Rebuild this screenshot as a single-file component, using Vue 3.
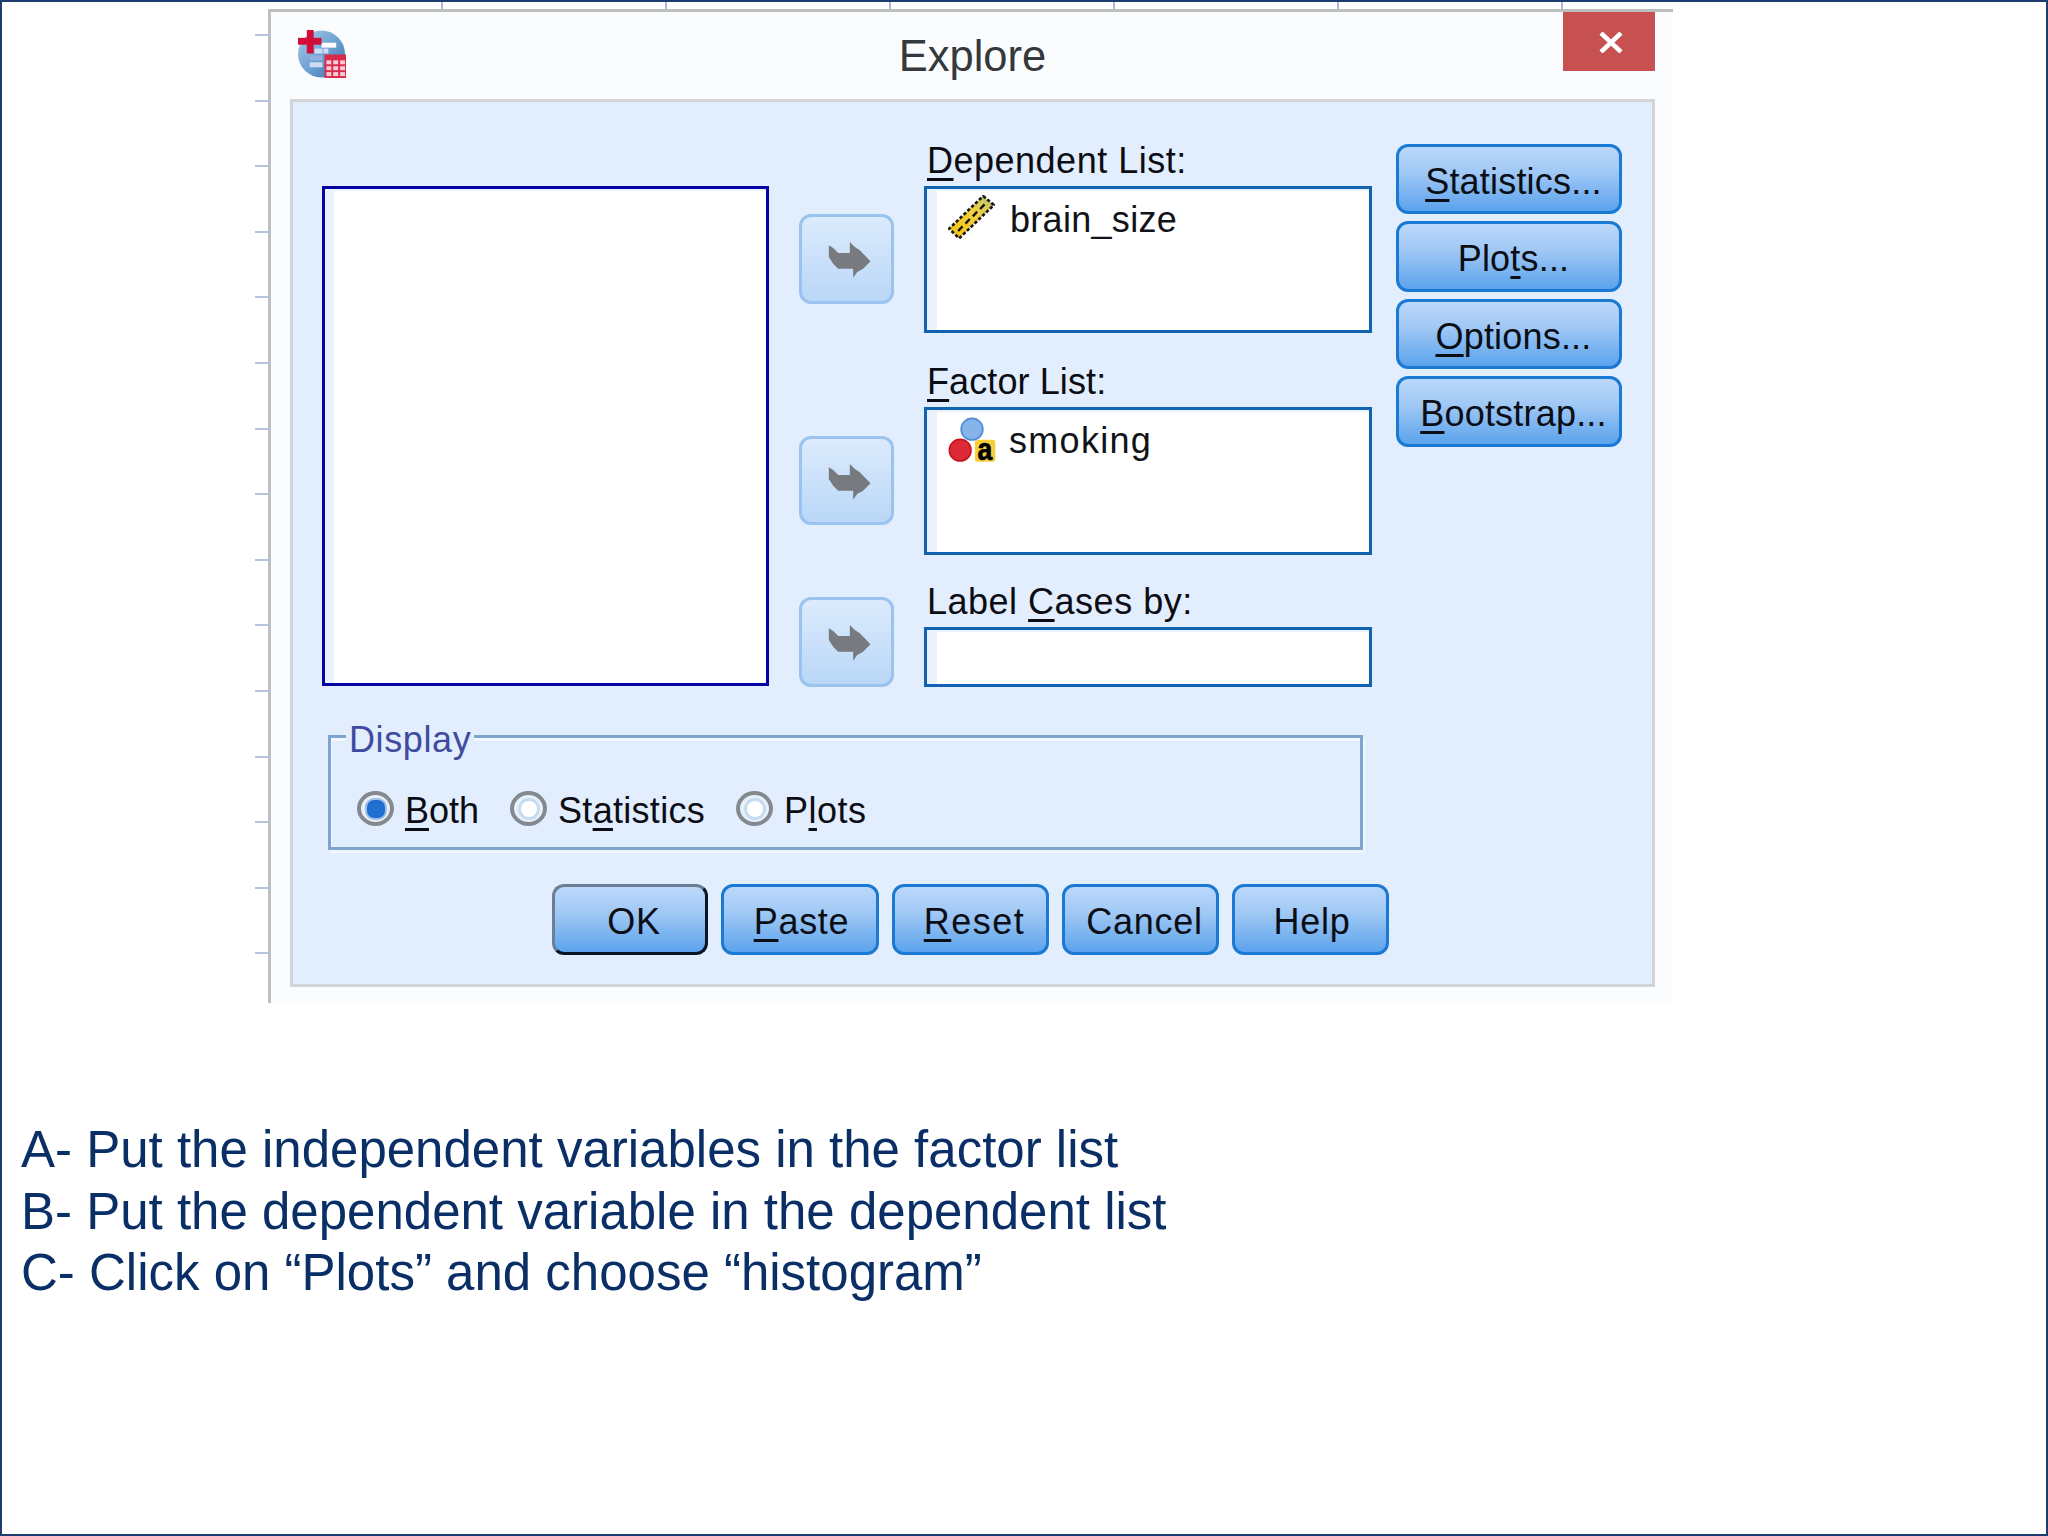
<script setup>
const arrows = ['a1', 'a2', 'a3']
</script>

<template>
  <div class="page">
    <div class="shot">
      <div class="corner"></div>
      <div class="ruler-top"></div>
      <div class="ruler-left"></div>
      <div class="sheet">
        <header class="titlebar">
          <svg class="app-icon" viewBox="0 0 49 49">
            <defs>
              <linearGradient id="globe" x1="0" y1="0" x2="1" y2="1">
                <stop offset="0" stop-color="#a9cbe8" />
                <stop offset="0.55" stop-color="#6a9fd0" />
                <stop offset="1" stop-color="#2f6fae" />
              </linearGradient>
            </defs>
            <circle cx="24" cy="24.5" r="24" fill="url(#globe)" />
            <rect x="24" y="13" width="15" height="5" fill="#fff" />
            <g fill="#cfdcf2">
              <rect x="17" y="19" width="8" height="5" />
              <rect x="26" y="19" width="5" height="5" />
              <rect x="12" y="26" width="13" height="5" fill="#8fb0e0" />
              <rect x="12" y="33" width="13" height="5" />
            </g>
            <rect x="9" y="0" width="7" height="24" fill="#d20d37" />
            <rect x="0" y="8" width="24" height="7" fill="#d20d37" />
            <rect x="27" y="25" width="22" height="24" fill="#d92b4c" />
            <g fill="#f7ccd8">
              <rect x="29" y="31" width="5" height="4" />
              <rect x="36" y="31" width="5" height="4" />
              <rect x="43" y="31" width="5" height="4" />
              <rect x="29" y="37" width="5" height="4" />
              <rect x="36" y="37" width="5" height="4" />
              <rect x="43" y="37" width="5" height="4" />
              <rect x="29" y="43" width="5" height="4" />
              <rect x="36" y="43" width="5" height="4" />
              <rect x="43" y="43" width="5" height="4" />
            </g>
          </svg>
          <div class="title">Explore</div>
          <button class="close">
            <svg viewBox="0 0 24 21" class="close-x">
              <path d="M2 1 L22 20 M22 1 L2 20" stroke="#fff" stroke-width="4.5" fill="none" />
            </svg>
          </button>
        </header>

        <section class="panel">
          <div class="upper">
            <div class="source"></div>

            <div class="arrows">
              <button v-for="a in arrows" :key="a" class="arrow" :class="a">
                <svg viewBox="145 125 128 108" class="arrow-g">
                  <polygon
                    points="147,135 160,143 175,158 210,158 210,125 225,140 240,150 272,183 250,205 232,215 220,232 220,205 175,205 160,190 147,170"
                    fill="#777a7e"
                  />
                </svg>
              </button>
            </div>

            <div class="fields">
              <label class="flabel sp5"><u>D</u>ependent List:</label>
              <div class="box dep">
                <div class="item">
                  <svg class="ruler" viewBox="55 42 140 132">
                    <defs>
                      <linearGradient id="rg" x1="0" y1="1" x2="1" y2="0">
                        <stop offset="0" stop-color="#f6c410" />
                        <stop offset="0.6" stop-color="#f0d040" />
                        <stop offset="1" stop-color="#b8c47a" />
                      </linearGradient>
                    </defs>
                    <polygon points="160,45 192,72 88,172 58,143" fill="url(#rg)" stroke="#1a1a1a" stroke-width="8" stroke-dasharray="10 6" />
                    <path d="M85 150 L98 136 M107 128 L120 114 M129 106 L142 92 M151 84 L164 70" stroke="#111" stroke-width="7" />
                  </svg>
                  <span class="iname name1">brain_size</span>
                </div>
              </div>

              <label class="flabel mid"><u>F</u>actor List:</label>
              <div class="box fac">
                <div class="item">
                  <svg class="nominal" viewBox="54 54 144 134">
                    <circle cx="126" cy="88" r="33" fill="#86b3ea" stroke="#4f8ed4" stroke-width="5" />
                    <circle cx="90" cy="152" r="33" fill="#dd2a36" stroke="#c4141f" stroke-width="5" />
                    <rect x="135" y="120" width="62" height="67" rx="8" fill="#f5cf3c" />
                    <text x="143" y="182" textLength="45" lengthAdjust="spacingAndGlyphs" class="a-glyph">a</text>
                  </svg>
                  <span class="iname name2">smoking</span>
                </div>
              </div>

              <label class="flabel mid2 sp5">Label <u>C</u>ases by:</label>
              <div class="box cases"></div>
            </div>

            <div class="side">
              <button class="btn side-b h70"><span><u>S</u>tatistics...</span></button>
              <button class="btn side-b h71"><span>Plo<u>t</u>s...</span></button>
              <button class="btn side-b h70"><span><u>O</u>ptions...</span></button>
              <button class="btn side-b h71"><span><u>B</u>ootstrap...</span></button>
            </div>
          </div>

          <div class="group">
            <div class="legend">Display</div>
            <div class="radios">
              <div class="radio-item">
                <span class="radio on"><i></i></span>
                <span class="rlabel"><u>B</u>oth</span>
              </div>
              <div class="radio-item">
                <span class="radio"><i></i></span>
                <span class="rlabel sp3">St<u>a</u>tistics</span>
              </div>
              <div class="radio-item">
                <span class="radio"><i></i></span>
                <span class="rlabel sp5">P<u>l</u>ots</span>
              </div>
            </div>
          </div>

          <div class="actions">
            <button class="btn act ok w156"><span>OK</span></button>
            <button class="btn act w158"><span><u>P</u>aste</span></button>
            <button class="btn act w157 wide"><span><u>R</u>eset</span></button>
            <button class="btn act w157 shift"><span>Cancel</span></button>
            <button class="btn act w157"><span>Help</span></button>
          </div>
        </section>
      </div>
    </div>

    <div class="notes">
      <p>A- Put the independent variables in the factor list</p>
      <p>B- Put the dependent variable in the dependent list</p>
      <p>C- Click on “Plots” and choose “histogram”</p>
    </div>
  </div>
</template>

<style scoped>
.page {
  width: 2048px;
  height: 1536px;
  box-sizing: border-box;
  border: 2px solid #1c3d6e;
  background: #fff;
  display: flex;
  flex-direction: column;
  font-family: "Liberation Sans", Arial, sans-serif;
  overflow: hidden;
}

.shot {
  display: grid;
  grid-template-columns: 13px 1405px;
  grid-template-rows: 7px 994px;
  margin-left: 253px;
  width: max-content;
}
.ruler-top {
  background: repeating-linear-gradient(
    to right,
    transparent 0 173px,
    #a9bdd8 173px 175px,
    transparent 175px 224px
  );
}
.ruler-left {
  background: repeating-linear-gradient(
    to bottom,
    transparent 0 25px,
    #b4c4de 25px 27px,
    transparent 27px 65.6px
  );
}

.sheet {
  box-sizing: border-box;
  border-top: 3px solid #bcbfbd;
  border-left: 3px solid #bdc0c2;
  background: #fbfcfe;
  display: flex;
  flex-direction: column;
  padding-right: 18px;
}

.titlebar {
  margin-left: 19px;
  height: 87px;
  display: grid;
  grid-template-columns: 1fr auto 1fr;
  align-items: start;
}
.app-icon {
  width: 48px;
  height: 48px;
  margin: 18px 0 0 8px;
}
.title {
  font-size: 43.5px;
  line-height: 43px;
  margin-top: 22.5px;
  color: #35383c;
}
.close {
  justify-self: end;
  width: 92px;
  height: 59px;
  border: 0;
  padding: 2px 0 0 4px;
  background: #c75050;
  display: flex;
  align-items: center;
  justify-content: center;
}
.close-x {
  width: 24px;
  height: 21px;
}

.panel {
  margin-left: 19px;
  height: 888px;
  box-sizing: border-box;
  border: 3px solid #d2d4d8;
  background: #e2eefd;
  padding: 42px 0 0 29px;
  display: flex;
  flex-direction: column;
}

.upper {
  display: flex;
  height: 543px;
}
.source {
  width: 447px;
  height: 500px;
  margin-top: 42px;
  box-sizing: border-box;
  border: 3px solid #0505a5;
  background: #fff;
  box-shadow: inset 9px 2px 0 #e9f2fd;
}

.arrows {
  width: 95px;
  margin: 0 30px;
  display: flex;
  flex-direction: column;
  padding-top: 70px;
}
.arrow {
  width: 95px;
  box-sizing: border-box;
  border: 3px solid #9ac4ef;
  border-radius: 12px;
  background: linear-gradient(to bottom, #dcebfc, #b9d7f8);
  padding: 2px 0 0 5px;
  display: flex;
  align-items: center;
  justify-content: center;
}
.a1 { height: 90px; }
.a2 { height: 89px; margin-top: 132px; }
.a3 { height: 90px; margin-top: 72px; }
.arrow-g {
  width: 43px;
  height: 36px;
}

.fields {
  width: 448px;
  display: flex;
  flex-direction: column;
}
.flabel {
  display: block;
  height: 42px;
  line-height: 34px;
  font-size: 36px;
  padding-left: 3px;
  color: #0c0c14;
  letter-spacing: 0.1px;
}
.sp5 { letter-spacing: 0.5px; }
.sp3 { letter-spacing: 0.3px; }
.mid { margin-top: 32px; }
.mid2 { margin-top: 30px; }
.box {
  box-sizing: border-box;
  border: 3px solid #0f63b0;
  background: #fff;
  box-shadow: inset 10px 2px 0 #e9f2fd;
}
.dep { height: 147px; }
.fac { height: 148px; }
.cases { height: 60px; }

.item {
  display: flex;
  align-items: flex-start;
  padding-left: 21px;
}
.dep .item { padding-top: 6px; }
.fac .item { padding-top: 8px; }
.ruler {
  width: 47px;
  height: 44px;
}
.nominal {
  width: 48px;
  height: 44px;
  overflow: visible;
}
.a-glyph {
  font-family: "Liberation Sans", Arial, sans-serif;
  font-weight: 700;
  font-size: 96px;
  fill: #000;
  stroke: #000;
  stroke-width: 2;
}
.iname {
  font-size: 36px;
  line-height: 32px;
  color: #111318;
}
.name1 { margin: 8.5px 0 0 15px; letter-spacing: 0.3px; }
.name2 { margin: 6.5px 0 0 13px; letter-spacing: 1.3px; }

.side {
  margin-left: 24px;
  width: 226px;
  display: flex;
  flex-direction: column;
  gap: 7px;
}
.h70 { height: 70px; }
.h71 { height: 71px; }

.btn {
  box-sizing: border-box;
  border: 3px solid #1a79d2;
  border-radius: 12px;
  background: linear-gradient(to bottom, #bbd8fa 0%, #a0c8f5 40%, #83b8f1 65%, #5ba3ed 100%);
  font-family: "Liberation Sans", Arial, sans-serif;
  font-size: 36px;
  color: #0b0e14;
  padding: 0;
  display: flex;
  align-items: center;
  justify-content: center;
}
.side-b { padding: 5px 0 0 9px; letter-spacing: 0.2px; }
.act { height: 71px; padding: 5px 0 0 3px; letter-spacing: 0.7px; }
.wide { letter-spacing: 1.5px; padding-left: 8px; }
.shift { padding-left: 8px; }

u {
  text-decoration: underline;
  text-decoration-thickness: 3px;
  text-underline-offset: 5px;
  text-decoration-skip-ink: none;
}

.group {
  position: relative;
  margin: 48px 0 0 6px;
  width: 1035px;
  height: 115px;
  box-sizing: border-box;
  border: 3px solid #7ea5cf;
  box-shadow: inset 1px 3px 0 #f3f7fe, 2px 3px 0 #f0f6fe;
}
.legend {
  position: absolute;
  left: 15px;
  top: -14.5px;
  padding: 0 3px;
  font-size: 36px;
  line-height: 32px;
  color: #3f4ba0;
  background: #e2eefd;
  letter-spacing: 0.6px;
}
.radios {
  display: grid;
  grid-template-columns: 153px 226px auto;
  padding: 53px 0 0 26px;
}
.radio-item {
  display: flex;
  align-items: flex-start;
}
.radio {
  width: 37px;
  height: 35px;
  box-sizing: border-box;
  border: 4px solid #83898f;
  border-radius: 50%;
  background: #e8f0fa;
  display: flex;
  align-items: center;
  justify-content: center;
}
.radio i {
  width: 16px;
  height: 16px;
  border-radius: 50%;
  background: #fff;
  box-shadow: 0 0 0 3px #c6dcf2;
}
.radio.on i {
  width: 18px;
  height: 18px;
  border-radius: 40%;
  background: #1f6fd0;
  box-shadow: 0 0 0 2px #9fc0e6;
}
.rlabel {
  margin: 2px 0 0 11px;
  font-size: 36px;
  line-height: 35px;
  color: #0c0c14;
}

.actions {
  display: flex;
  gap: 13px;
  margin: 34px 0 0 230px;
}
.w156 { width: 156px; }
.w157 { width: 157px; }
.w158 { width: 158px; }
.ok {
  padding-left: 8px;
  border-color: #6a7f94 #0a1624 #0a1624 #6a7f94;
}

.notes {
  margin-top: 116.3px;
  padding-left: 19px;
  color: #0a2f66;
  font-size: 51px;
  line-height: 61.5px;
}
.notes p {
  margin: 0;
}
</style>
